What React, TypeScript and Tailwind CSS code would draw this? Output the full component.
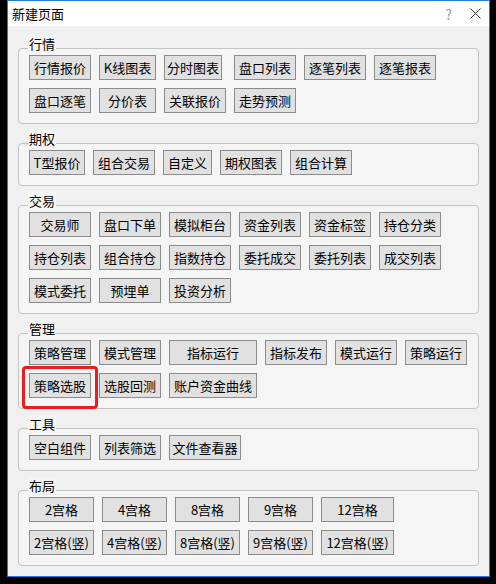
type Btn = { t: string; w?: string; mark?: boolean };

type Group = { title: string; cols: string; items: Btn[] };

const groups: Group[] = [
  {
    title: "行情",
    cols: "grid-cols-[62px_57px_62px_62px_62px_62px]",
    items: [
      { t: "行情报价" },
      { t: "K线图表" },
      { t: "分时图表", w: "w-[58px]" },
      { t: "盘口列表" },
      { t: "逐笔列表" },
      { t: "逐笔报表" },
      { t: "盘口逐笔" },
      { t: "分价表" },
      { t: "关联报价" },
      { t: "走势预测" },
    ],
  },
  {
    title: "期权",
    cols: "grid-cols-[56px_62px_49px_62px_62px]",
    items: [{ t: "T型报价" }, { t: "组合交易" }, { t: "自定义" }, { t: "期权图表" }, { t: "组合计算" }],
  },
  {
    title: "交易",
    cols: "grid-cols-[62px_62px_62px_62px_62px_62px]",
    items: [
      { t: "交易师" },
      { t: "盘口下单" },
      { t: "模拟柜台" },
      { t: "资金列表" },
      { t: "资金标签" },
      { t: "持仓分类" },
      { t: "持仓列表" },
      { t: "组合持仓" },
      { t: "指数持仓" },
      { t: "委托成交" },
      { t: "委托列表" },
      { t: "成交列表" },
      { t: "模式委托" },
      { t: "预埋单" },
      { t: "投资分析" },
    ],
  },
  {
    title: "管理",
    cols: "grid-cols-[62px_62px_88px_62px_62px_62px]",
    items: [
      { t: "策略管理" },
      { t: "模式管理" },
      { t: "指标运行" },
      { t: "指标发布" },
      { t: "模式运行" },
      { t: "策略运行" },
      { t: "策略选股", mark: true },
      { t: "选股回测" },
      { t: "账户资金曲线" },
    ],
  },
  {
    title: "工具",
    cols: "grid-cols-[62px_62px_72px]",
    items: [{ t: "空白组件" }, { t: "列表筛选" }, { t: "文件查看器" }],
  },
  {
    title: "布局",
    cols: "grid-cols-[65px_65px_65px_65px_73px]",
    items: [
      { t: "2宫格" },
      { t: "4宫格" },
      { t: "8宫格" },
      { t: "9宫格" },
      { t: "12宫格" },
      { t: "2宫格(竖)" },
      { t: "4宫格(竖)" },
      { t: "8宫格(竖)" },
      { t: "9宫格(竖)" },
      { t: "12宫格(竖)" },
    ],
  },
];

function Button({ b }: { b: Btn }) {
  return (
    <div className={`relative justify-self-start ${b.w ?? "w-full"}`}>
      <button className="flex h-[25px] w-full items-center justify-center whitespace-nowrap border border-[#8c8c8c] bg-[#e1e1e1] text-[13px] leading-none text-black">
        {b.t}
      </button>
      {b.mark && (
        <div className="pointer-events-none absolute -top-[7px] -right-[7px] -bottom-[11px] -left-[7px] rounded-[4px] border-[3px] border-[#f01c1c]" />
      )}
    </div>
  );
}

function GroupBox({ g }: { g: Group }) {
  return (
    <div className="relative rounded-[4px] border border-[#c3c3c3] bg-[#f5f5f5] pt-[6px] pb-[10px] pl-[10px]">
      <span className="absolute -top-[14px] left-[9px] bg-[#f5f5f5] px-[1px] text-[13px] leading-[17px] text-black">
        {g.title}
      </span>
      <div className={`grid gap-x-2 gap-y-2 ${g.cols}`}>
        {g.items.map((b) => (
          <Button key={b.t} b={b} />
        ))}
      </div>
    </div>
  );
}

export default function App() {
  return (
    <div className="h-[584px] w-[496px] bg-black pl-[7px] font-['Noto_Sans_CJK_SC',sans-serif]">
      <div className="flex h-[577px] w-[483px] flex-col border border-[#1f7fd6] bg-[#f0f0f0]">
        <div className="flex h-[25px] items-center bg-white pl-[4px] pr-[8px] text-[13px] leading-none text-black">
          <span>新建页面</span>
          <span className="ml-auto mr-[18px] text-[14px] text-[#9a9a9a]">?</span>
          <svg width="11" height="11" viewBox="0 0 11 11">
            <path d="M0.5 0.5 L10.5 10.5 M10.5 0.5 L0.5 10.5" stroke="#333" strokeWidth="1" />
          </svg>
        </div>
        <div className="flex flex-col gap-[19px] pt-[22px] pr-[10px] pl-[10px]">
          {groups.map((g) => (
            <GroupBox key={g.title} g={g} />
          ))}
        </div>
      </div>
    </div>
  );
}
